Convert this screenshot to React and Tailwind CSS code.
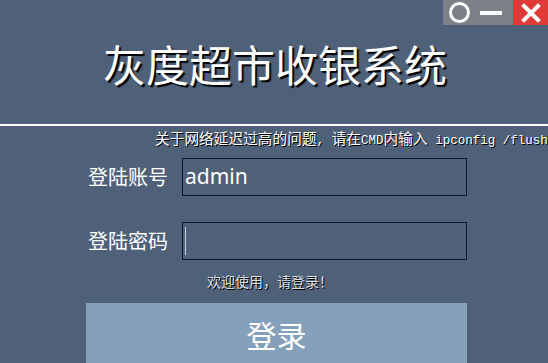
import React from "react";

const cjk = { fontFamily: '"Noto Sans CJK SC", "Noto Sans", sans-serif' };
const mono = { fontFamily: '"Liberation Mono", monospace', fontSize: "12.5px", letterSpacing: "0" };

function WindowControls() {
  return (
    <div className="absolute top-0 right-0 flex h-[25px]">
      <div className="flex w-[70px] items-center gap-[10px] bg-[#7c8189] pl-[6px]">
        <div className="h-[21px] w-[21px] rounded-full border-[3px] border-white" />
        <div className="h-[4px] w-[22px] bg-white" />
      </div>
      <div className="flex w-[35px] items-center justify-center bg-[#e03a37]">
        <svg width="20" height="20" viewBox="0 0 20 20">
          <path d="M3 3 L17 17 M17 3 L3 17" stroke="white" strokeWidth="4" strokeLinecap="square" />
        </svg>
      </div>
    </div>
  );
}

function Field({ label, value }) {
  return (
    <div className="flex items-center">
      <div className="w-[182px] pl-[88px] text-[20px] leading-none text-white" style={cjk}>
        {label}
      </div>
      <div className="flex h-[38px] w-[285px] items-center border-[1.5px] border-[#0d1526] bg-[#4f6179] pl-[2px]">
        {value ? (
          <span className="text-[21px] text-white" style={{ fontFamily: '"Noto Sans", sans-serif' }}>
            {value}
          </span>
        ) : (
          <span className="h-[28px] w-[1px] bg-white/70" />
        )}
      </div>
    </div>
  );
}

export default function App() {
  return (
    <div className="relative flex h-[363px] w-[548px] flex-col overflow-hidden bg-[#4f6179]">
      <WindowControls />

      <div className="flex h-[127px] items-center justify-center pt-[4px] pl-[2px]">
        <h1
          className="text-[43px] leading-none text-white [text-shadow:2px_2px_1px_#000]"
          style={cjk}
        >
          灰度超市收银系统
        </h1>
      </div>

      <div className="h-[2px] bg-white" />

      <div
        className="mt-[4px] whitespace-nowrap pl-[155px] text-[14.6px] leading-[16px] tracking-[0.1px] text-white [text-shadow:1px_1px_0_#000]"
        style={cjk}
      >
        关于网络延迟过高的问题<span style={mono}>, </span>请在<span style={mono}>CMD</span>内输入<span style={mono}> ipconfig /flush</span>
      </div>

      <div className="mt-[9px] flex flex-col gap-[26px]">
        <Field label="登陆账号" value="admin" />
        <Field label="登陆密码" />
      </div>

      <div
        className="mt-[14px] pl-[207px] text-[14px] leading-none text-[#d9dde4] [text-shadow:1px_1px_0_#000]"
        style={cjk}
      >
        欢迎使用，请登录！
      </div>

      <div className="mt-[15px] ml-[86px] flex h-[62px] w-[381px] items-center justify-center bg-[#84a0bb] pt-[2px]">
        <span className="text-[30px] leading-none text-white" style={cjk}>
          登录
        </span>
      </div>
    </div>
  );
}
